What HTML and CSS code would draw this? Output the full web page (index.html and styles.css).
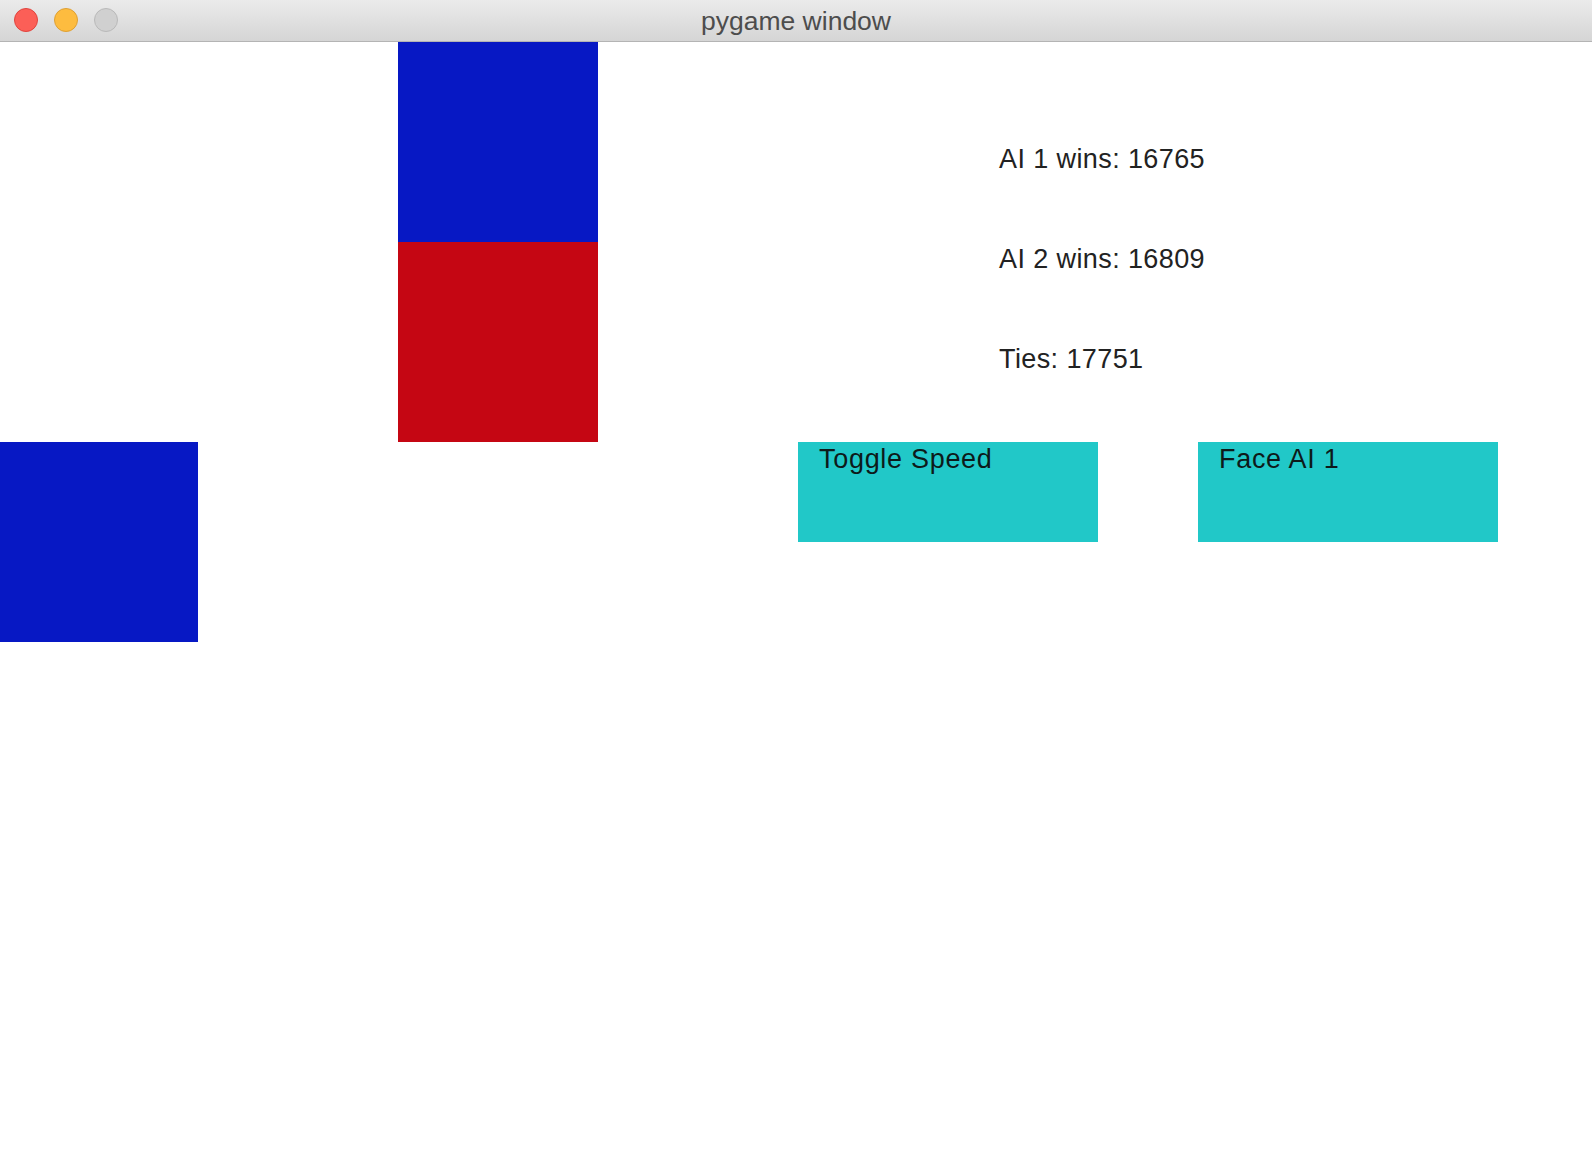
FILE: index.html
```html
<!DOCTYPE html>
<html>
<head>
<meta charset="utf-8">
<link rel="stylesheet" href="styles.css">
<title>pygame window</title>
</head>
<body>
<div class="window">
  <div class="titlebar">
    <div class="lights">
      <span class="light red"></span>
      <span class="light yellow"></span>
      <span class="light gray"></span>
    </div>
    <div class="title">pygame window</div>
  </div>
  <div class="content">
    <div class="board">
      <div class="cell"></div>
      <div class="cell"></div>
      <div class="cell blue"></div>
      <div class="cell"></div>
      <div class="cell"></div>
      <div class="cell red"></div>
      <div class="cell blue"></div>
      <div class="cell"></div>
      <div class="cell"></div>
    </div>
    <div class="panel">
      <div class="stats">
        <div class="stat">AI 1 wins: 16765</div>
        <div class="stat">AI 2 wins: 16809</div>
        <div class="stat">Ties: 17751</div>
      </div>
      <div class="buttons">
        <div class="button">Toggle Speed</div>
        <div class="button">Face AI 1</div>
      </div>
    </div>
  </div>
</div>
</body>
</html>
```

FILE: styles.css
```css
html, body {
  margin: 0;
  padding: 0;
  background: #ffffff;
}

.window {
  width: 1592px;
  height: 1166px;
  display: flex;
  flex-direction: column;
  background: #ffffff;
  overflow: hidden;
}

.titlebar {
  height: 41px;
  flex: none;
  position: relative;
  background: linear-gradient(#ebebeb, #d5d5d5);
  border-bottom: 1px solid #b4b4b4;
  display: flex;
  align-items: center;
  justify-content: center;
}

.lights {
  position: absolute;
  left: 14px;
  top: 8px;
  display: flex;
  gap: 16px;
}

.light {
  width: 22px;
  height: 22px;
  border-radius: 50%;
  border: 1px solid transparent;
}

.light.red {
  background: #fc5f57;
  border-color: #e0443e;
}

.light.yellow {
  background: #fdbc3f;
  border-color: #dea034;
}

.light.gray {
  background: #d0d0d0;
  border-color: #b9b9b9;
}

.title {
  font-family: "Liberation Sans", Arial, sans-serif;
  font-size: 26.5px;
  color: #4d4d4d;
  line-height: 1;
  margin-top: 2px;
}

.content {
  flex: 1;
  display: flex;
  align-items: flex-start;
}

.board {
  display: grid;
  grid-template-columns: 198px 200px 200px;
  grid-template-rows: repeat(3, 200px);
  flex: none;
}

.cell.blue {
  background: #0718c4;
}

.cell.red {
  background: #c50613;
}

.panel {
  margin-left: 200px;
  display: flex;
  flex-direction: column;
  font-family: "Liberation Sans", Arial, sans-serif;
  font-size: 27px;
}

.stats {
  padding-top: 104px;
  padding-left: 201px;
  display: flex;
  flex-direction: column;
  gap: 73px;
}

.stat {
  height: 27px;
  line-height: 27px;
  color: #222222;
  letter-spacing: 0.4px;
}

.buttons {
  margin-top: 69px;
  display: flex;
  gap: 100px;
}

.button {
  width: 300px;
  height: 100px;
  box-sizing: border-box;
  background: #21c8c8;
  color: #0d1a1a;
  padding: 4px 0 0 21px;
  line-height: 27px;
  letter-spacing: 0.7px;
}
```
